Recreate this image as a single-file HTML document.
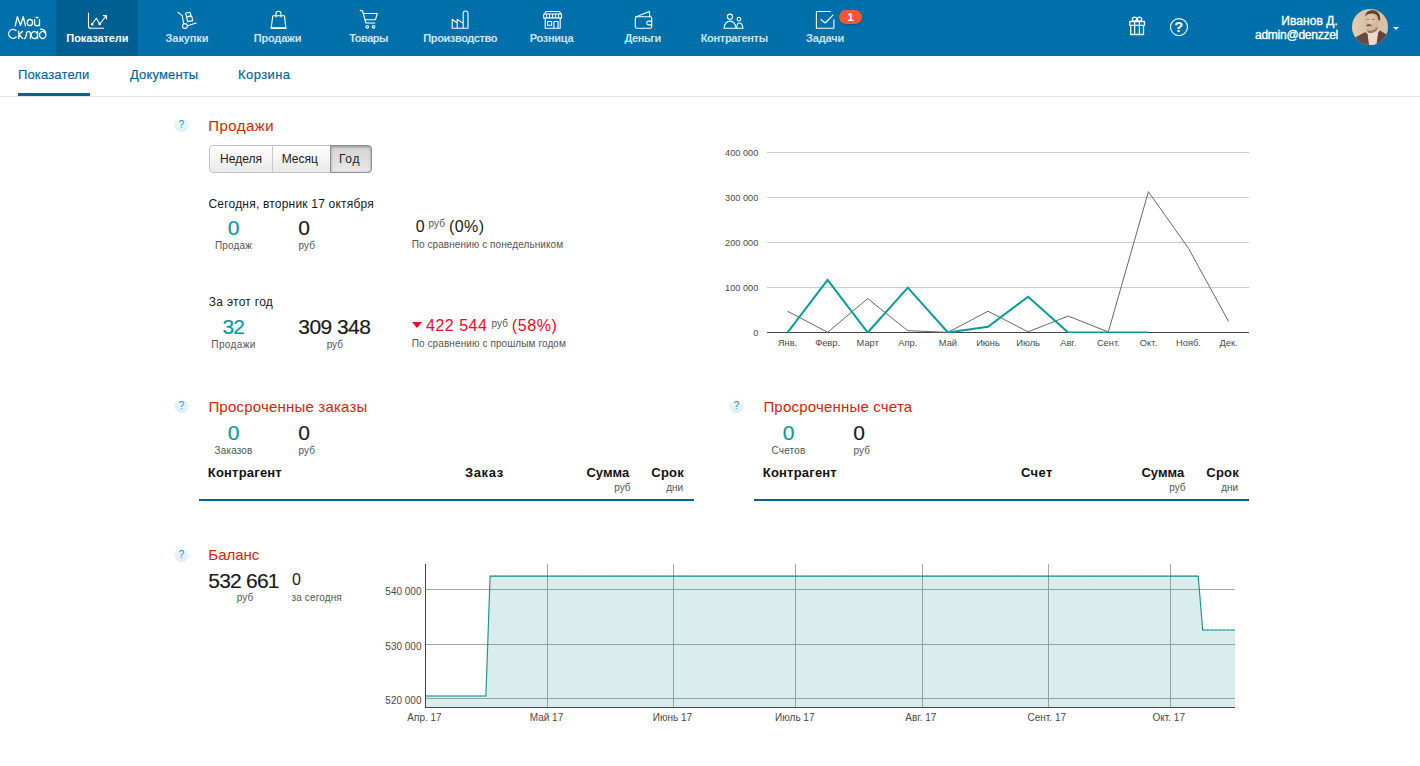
<!DOCTYPE html>
<html lang="ru">
<head>
<meta charset="utf-8">
<title>МойСклад</title>
<style>
*{box-sizing:border-box;margin:0;padding:0}
html,body{width:1420px;height:766px;overflow:hidden;background:#fff}
body{font-family:"Liberation Sans",sans-serif;color:#1a1a1a;position:relative;font-size:13px}
.abs{position:absolute}
#topnav{position:absolute;left:0;top:0;width:1420px;height:56px;background:#0070ab}
#topnav .active{position:absolute;left:56px;top:0;width:82px;height:56px;background:#005f92}
.ni{position:absolute;top:0;height:56px;width:120px;text-align:center;color:#cfe6f4;font-size:11px;font-weight:bold}
.ni .lbl{position:absolute;left:0;right:0;top:32px;line-height:13px;white-space:nowrap}
.ni.act{color:#fff}
.ni svg{position:absolute;left:50%;top:9px;margin-left:-12px;width:24px;height:24px;fill:none;stroke:#fff;stroke-width:1.1;stroke-linecap:round;stroke-linejoin:round}
#subnav{position:absolute;left:0;top:56px;width:1420px;height:41px;border-bottom:1px solid #e4e4e4}
#subnav span{position:absolute;top:11px;font-size:13px;letter-spacing:0.15px;line-height:16px;color:#00639c;white-space:nowrap;-webkit-text-stroke:.15px}
#subnav .ul{position:absolute;left:18px;top:37px;width:72px;height:3px;background:#00639a}
.h{position:absolute;font-size:15px;line-height:18px;color:#d32211;white-space:nowrap}
.q{position:absolute;width:15px;height:15px;border-radius:7.5px;background:linear-gradient(#fdfeff,#eaf5fb 40%,#dcedf8);color:#2196c6;font-size:10.5px;line-height:15px;text-align:center}
.t{position:absolute;white-space:nowrap}
.c{text-align:center}
.big{font-size:20px;line-height:22px;color:#111}
.teal{color:#039a9a}
.sm{font-size:10px;line-height:12px;color:#555}
.red{color:#fb0527}

.nl{position:absolute;top:31px;width:0;display:flex;justify-content:center;white-space:nowrap;color:#cde5f3;font-size:11px;line-height:14px;font-weight:bold}
.nl.act{color:#fff;letter-spacing:-0.1px}
.badge{position:absolute;left:839px;top:10px;width:23px;height:14px;border-radius:7px;background:#ff5533;color:#fff;font-size:11px;font-weight:bold;line-height:14px;text-align:center;box-shadow:0 1px 2px rgba(0,0,0,.25)}
.hq{position:absolute;left:1170.4px;top:20.4px;width:17px;text-align:center;color:#fff;font-weight:bold;font-size:14px;line-height:14px;-webkit-text-stroke:.2px #fff}
.uname{position:absolute;right:82px;color:#fff;font-size:12px;line-height:14px;white-space:nowrap;-webkit-text-stroke:.35px #fff}
.avatar{position:absolute;left:1352px;top:9px;width:36px;height:36px;border-radius:18px;background:radial-gradient(circle at 50% 35%,#d9c3a5 0,#c4a987 30%,#8a6f58 60%,#4a3a33 100%)}
.caret{position:absolute;left:1392.8px;top:26.8px;width:0;height:0;border-left:3.1px solid transparent;border-right:3.1px solid transparent;border-top:3.3px solid #fff}

.hd{color:#dc2308}
.gr{color:#555}
.b{font-weight:bold;color:#111}
.tri{position:absolute;width:0;height:0;border-left:5.5px solid transparent;border-right:5.5px solid transparent;border-top:6.3px solid #fb0527}
.ln{position:absolute;width:495px;height:2px;background:#00639a}
.bg{position:absolute;height:28px;width:163px;border:1px solid #c3c3c3;border-radius:4px;background:linear-gradient(#fff,#e9e9e9);font-size:12px;line-height:26px;color:#222}
.bg span{position:absolute;top:0;display:block;text-align:center;border-right:1px solid #c9c9c9;height:26px}
.bg span.on{top:-1px;left:120px;width:42px;height:28px;line-height:26.6px;border:1px solid #8e8e8e;border-radius:0 4px 4px 0;background:linear-gradient(#d4d4d4,#e8e8e8);box-shadow:inset 0 1px 3px rgba(0,0,0,.32)}
</style>
</head>
<body>
<div id="topnav">
  <div class="active"></div>
  <svg class="abs" style="left:0;top:0" width="1420" height="56" viewBox="0 0 1420 56" fill="none" stroke="#fff" stroke-width="1.1" stroke-linecap="round" stroke-linejoin="round">
    <!-- logo -->
    <g stroke-width="1.3">
    <path d="M15.2 25.8L17.4 16.6L20.5 25.5L23.2 16.6L25.5 25.8"/>
    <ellipse cx="29.9" cy="22.6" rx="2.7" ry="3.1"/>
    <path d="M34.6 19.6V23.2A2.45 2.6 0 0 0 39.5 23.2V19.6M39.5 22V25.8M36.1 17.2A1.1 1.1 0 0 0 38 17.2"/>
    <path d="M16 30.6A4.4 4.4 0 1 0 16.2 37"/>
    <path d="M18.8 31.2V38.6M22.6 31.2L19 34.8L22.8 38.6"/>
    <path d="M24.6 38.5C26 38.2 26.2 36 26.4 34C26.6 32 27.2 31.3 28.4 31.3C29.8 31.3 30.4 32.2 30.4 34V38.6"/>
    <path d="M37.6 31.3V38.6M37.6 35A3.2 3.5 0 1 0 37.6 35.1"/>
    <path d="M45.9 34.9A3.2 3.5 0 1 0 45.9 35C45.9 31 44 28.8 40.4 29.2"/>
    </g>
    <!-- chart -->
    <path d="M88.5 13V26Q88.5 28.3 90.8 28.3H103.7"/>
    <path d="M92.1 24.3L96.3 18.2L99.7 24L106.4 15.7M103.3 15.6H106.5V19"/>
    <circle cx="92.1" cy="24.3" r="0.8" fill="#fff"/><circle cx="99.7" cy="24" r="0.8" fill="#fff"/>
    <!-- hand truck -->
    <path d="M178.1 12.3L182.2 15.7L183.6 23.3"/>
    <circle cx="184.9" cy="26" r="2.4"/>
    <path d="M187.6 25.7L196.1 23"/>
    <path d="M185.6 13.3L190 12.3L191 15.8L186.6 16.9ZM186.6 16.9L191.7 16.2L192.7 20.6L187.6 21.6Z"/>
    <!-- bag -->
    <path d="M272.8 15.7H284.5L285.8 28.3H271.2Z"/>
    <path d="M271.2 28.1H285.8" stroke-width="1.6"/>
    <path d="M276 17V13.8A2.5 2.5 0 0 1 281 13.8V17"/>
    <!-- cart -->
    <path d="M360.2 10.4L362.6 11L365.9 23H374.8"/>
    <path d="M363.3 13.5H377.3L375.4 19.8H365"/>
    <circle cx="367.2" cy="26.8" r="1.3"/><circle cx="373.5" cy="26.8" r="1.3"/>
    <!-- factory -->
    <path d="M452.2 28.3V19.2L457.2 23V19.2L463.2 23.4M452.2 28.3H468V13.4A2.4 2.4 0 0 0 463.2 13.4V28.3M457.2 23V28.3"/>
    <!-- shop -->
    <path d="M546 11.5H559.4L561.6 15V17.9H543.6V15ZM545.2 18V28.3H560.2V18M547.6 21.5H551.6V25.3H547.6ZM553.9 28.3V21.5H558V28.3"/>
    <path d="M546.6 14V17.9M549.6 14V17.9M552.6 14V17.9M555.6 14V17.9M558.6 14V17.9M544 14H561.2" stroke-width="1"/>
    <!-- wallet -->
    <path d="M635.3 18.2A1.5 1.5 0 0 1 636.8 16.7H650.2A1.5 1.5 0 0 1 651.7 18.2V26.8A1.5 1.5 0 0 1 650.2 28.3H636.8A1.5 1.5 0 0 1 635.3 26.8Z"/>
    <path d="M635.6 16.9L649.3 11.4L649.9 16.7"/>
    <path d="M651.7 21.1H648.6A1.6 1.6 0 0 0 648.6 24.9H651.7"/>
    <!-- people -->
    <circle cx="730" cy="16.7" r="2.6"/>
    <path d="M724 28.3C724.6 23.5 727 21.1 730 21.1C733 21.1 735.4 23.5 736 28.3Z"/>
    <circle cx="738.9" cy="19.2" r="1.8"/>
    <path d="M736.6 28.3C736.8 25 737.6 23 739.2 23C741.4 23 742.7 25 743 28.3Z"/>
    <!-- tasks -->
    <path d="M830.3 11.5H816.4V28.3H833.9V19.8"/>
    <path d="M821 19.5L825.2 23L833 15.2"/>
    <!-- gift -->
    <g stroke-width="1.3"><path d="M1129.7 21.5H1144.5V25.3H1129.7ZM1130.7 25.3V34.5H1143.5V25.3M1134.6 21.5V34.5M1139.4 21.5V34.5"/>
    <circle cx="1134.5" cy="19.2" r="2.1"/><circle cx="1139.5" cy="19.2" r="2.1"/></g>
    <!-- help -->
    <circle cx="1179" cy="27.1" r="8.5"/>
  </svg>
  <div class="nl act" style="left:97.4px">Показатели</div>
  <div class="nl" style="left:187px;letter-spacing:-0.1px">Закупки</div>
  <div class="nl" style="left:277.5px;letter-spacing:-0.18px">Продажи</div>
  <div class="nl" style="left:368.6px;letter-spacing:-0.5px">Товары</div>
  <div class="nl" style="left:460.2px;letter-spacing:-0.4px">Производство</div>
  <div class="nl" style="left:551.5px;letter-spacing:-0.3px">Розница</div>
  <div class="nl" style="left:642.7px;letter-spacing:-0.4px">Деньги</div>
  <div class="nl" style="left:734.2px;letter-spacing:-0.3px">Контрагенты</div>
  <div class="nl" style="left:825.1px;letter-spacing:-0.13px">Задачи</div>
  <div class="badge">1</div>
  <div class="hq">?</div>
  <div class="uname" style="top:14px;letter-spacing:.09px">Иванов Д.</div>
  <div class="uname" style="top:28px;letter-spacing:-.25px">admin@denzzel</div>
  <svg class="abs" style="left:1352px;top:9px" width="36" height="36" viewBox="1352 9 36 36">
    <defs><clipPath id="avc"><circle cx="1370" cy="27" r="18"/></clipPath><filter id="avb" x="-10%" y="-10%" width="120%" height="120%"><feGaussianBlur stdDeviation="0.75"/></filter>
    <linearGradient id="avg" x1="0" y1="0" x2="1" y2="0"><stop offset="0" stop-color="#e2cfb8"/><stop offset="0.5" stop-color="#d6bfa3"/><stop offset="1" stop-color="#dcc5aa"/></linearGradient></defs>
    <g clip-path="url(#avc)"><rect x="1350" y="7" width="40" height="40" fill="url(#avg)"/>
    <g filter="url(#avb)">
      <path d="M1354 38L1365 32.2L1368 34L1369.5 46H1352Z" fill="#6a4a40"/>
      <path d="M1388 35.5L1380 30.5L1377.5 33L1375.5 46H1390Z" fill="#64443b"/>
      <path d="M1367.4 32.6L1378.4 31L1376.2 46H1369.2Z" fill="#ebdac5"/>
      <ellipse cx="1371.8" cy="21.6" rx="6.8" ry="8.8" fill="#d3b999"/>
      <ellipse cx="1370.6" cy="19.5" rx="4.6" ry="5" fill="#dcc5a8"/>
      <path d="M1365.2 16.5C1365.6 12 1369 9.9 1373 10.2C1377.5 10.6 1380.5 13.5 1380.2 20.5L1378.3 20C1378 16 1376.4 13.6 1372 13.6C1368.5 13.6 1366.6 14.8 1365.2 16.5Z" fill="#5d3f33"/>
      <path d="M1366.6 25.7C1367.6 24 1369.8 24 1371.4 25.6C1370 25.6 1368 25.8 1366.6 25.7Z" fill="#6b4a3c" stroke="#6b4a3c" stroke-width="0.7"/>
      <path d="M1366.3 27.5C1367.5 31.8 1373 32.5 1378 26C1377.5 31.5 1372.5 34.5 1368 32.5Z" fill="#9a7a66"/>
      <path d="M1366.8 19.4H1369.2M1371.8 19.4H1374.4" stroke="#8a6a58" stroke-width="0.9"/>
    </g></g>
  </svg>
  <div class="caret"></div>
</div>
<div id="subnav">
  <span style="left:18px">Показатели</span>
  <span style="left:130px">Документы</span>
  <span style="left:238px;letter-spacing:.42px">Корзина</span>
  <div class="ul"></div>
</div>
<!--MAIN-->
<svg class="abs" style="left:0;top:0" width="1420" height="766" viewBox="0 0 1420 766" font-family="Liberation Sans, sans-serif"><defs><clipPath id="c1"><rect x="760" y="140" width="500" height="193"/></clipPath></defs><rect x="767" y="152.0" width="482" height="1" fill="#cbcbcb"/><rect x="767" y="197.0" width="482" height="1" fill="#cbcbcb"/><rect x="767" y="242.0" width="482" height="1" fill="#cbcbcb"/><rect x="767" y="287.0" width="482" height="1" fill="#cbcbcb"/><text x="758.3" y="155.7" font-size="9.2" fill="#4a4a4a" text-anchor="end">400 000</text><text x="758.3" y="200.7" font-size="9.2" fill="#4a4a4a" text-anchor="end">300 000</text><text x="758.3" y="245.7" font-size="9.2" fill="#4a4a4a" text-anchor="end">200 000</text><text x="758.3" y="290.7" font-size="9.2" fill="#4a4a4a" text-anchor="end">100 000</text><text x="758.3" y="335.7" font-size="9.2" fill="#4a4a4a" text-anchor="end">0</text><text x="787.5" y="345.9" font-size="9.3" fill="#4a4a4a" text-anchor="middle">Янв.</text><text x="827.6" y="345.9" font-size="9.3" fill="#4a4a4a" text-anchor="middle">Февр.</text><text x="867.7" y="345.9" font-size="9.3" fill="#4a4a4a" text-anchor="middle">Март</text><text x="907.8" y="345.9" font-size="9.3" fill="#4a4a4a" text-anchor="middle">Апр.</text><text x="947.9" y="345.9" font-size="9.3" fill="#4a4a4a" text-anchor="middle">Май</text><text x="988.0" y="345.9" font-size="9.3" fill="#4a4a4a" text-anchor="middle">Июнь</text><text x="1028.1" y="345.9" font-size="9.3" fill="#4a4a4a" text-anchor="middle">Июль</text><text x="1068.2" y="345.9" font-size="9.3" fill="#4a4a4a" text-anchor="middle">Авг.</text><text x="1108.3" y="345.9" font-size="9.3" fill="#4a4a4a" text-anchor="middle">Сент.</text><text x="1148.4" y="345.9" font-size="9.3" fill="#4a4a4a" text-anchor="middle">Окт.</text><text x="1188.5" y="345.9" font-size="9.3" fill="#4a4a4a" text-anchor="middle">Нояб.</text><text x="1228.6" y="345.9" font-size="9.3" fill="#4a4a4a" text-anchor="middle">Дек.</text><rect x="767" y="332.0" width="482" height="1" fill="#454545"/><g clip-path="url(#c1)"><polyline fill="none" stroke="#696969" stroke-width="1" points="787.5,311.21 827.6,332.27 867.7,298.62 907.8,330.7 947.9,332.37 988.0,311.21 1028.1,331.82 1068.2,316.07 1108.3,331.96 1148.4,191.69 1188.5,248.31 1228.6,321.52"/><polyline fill="none" stroke="#069b9b" stroke-width="2" stroke-linejoin="miter" points="787.5,332.5 827.6,279.89 867.7,332.5 907.8,287.63 947.9,332.5 988.0,326.69 1028.1,296.81 1068.2,332.5 1108.3,332.5 1148.4,332.5"/></g><rect x="426" y="589" width="809" height="1" fill="#a2a9a9"/><rect x="426" y="644" width="809" height="1" fill="#a2a9a9"/><rect x="426" y="698" width="809" height="1" fill="#a2a9a9"/><rect x="547" y="564" width="1" height="143" fill="#a2a9a9"/><rect x="673" y="564" width="1" height="143" fill="#a2a9a9"/><rect x="795" y="564" width="1" height="143" fill="#a2a9a9"/><rect x="922" y="564" width="1" height="143" fill="#a2a9a9"/><rect x="1048" y="564" width="1" height="143" fill="#a2a9a9"/><rect x="1170" y="564" width="1" height="143" fill="#a2a9a9"/><polygon fill="#1b9293" fill-opacity="0.165" points="425.5,696.0 485.9,696.0 490.1,576.1 1198.2,576.1 1202.7,630.0 1235.0,630.0 1235,707 425.5,707"/><polyline fill="none" stroke="#1b9293" stroke-width="1.15" points="425.5,696.0 485.9,696.0 490.1,576.1 1198.2,576.1 1202.7,630.0 1235.0,630.0"/><path fill="none" stroke="#0f6f70" stroke-opacity="0.55" stroke-width="1.1" stroke-dasharray="1.1 2.9735" d="M427 696.0H485.9M490.5 576.1H1198M1203 630.0H1235"/><rect x="425" y="564" width="1" height="144" fill="#454545"/><rect x="425" y="707" width="810" height="1" fill="#454545"/><text x="421.5" y="594.9" font-size="10" fill="#4a4a4a" text-anchor="end">540 000</text><text x="421.5" y="649.9" font-size="10" fill="#4a4a4a" text-anchor="end">530 000</text><text x="421.5" y="703.9" font-size="10" fill="#4a4a4a" text-anchor="end">520 000</text><text x="424.5" y="720.9" font-size="10" fill="#4a4a4a" text-anchor="middle">Апр. 17</text><text x="546.5" y="720.9" font-size="10" fill="#4a4a4a" text-anchor="middle">Май 17</text><text x="672.5" y="720.9" font-size="10" fill="#4a4a4a" text-anchor="middle">Июнь 17</text><text x="794.8" y="720.9" font-size="10" fill="#4a4a4a" text-anchor="middle">Июль 17</text><text x="920.8" y="720.9" font-size="10" fill="#4a4a4a" text-anchor="middle">Авг. 17</text><text x="1046.8" y="720.9" font-size="10" fill="#4a4a4a" text-anchor="middle">Сент. 17</text><text x="1168.8" y="720.9" font-size="10" fill="#4a4a4a" text-anchor="middle">Окт. 17</text></svg>
<div class="q" style="left:174.0px;top:116.9px">?</div>
<div class="t hd" style="font-size:15px;line-height:18px;top:117.00px;left:208.3px;letter-spacing:.45px;">Продажи</div>
<div class="bg" style="left:209px;top:145px"><span style="left:0;width:63px">Неделя</span><span style="left:63px;width:57.5px;padding-right:3px">Месяц</span><span class="on" style="letter-spacing:.7px;padding-right:3px">Год</span></div>
<div class="t " style="font-size:12px;line-height:14px;top:196.74px;left:208.5px;letter-spacing:.2px;">Сегодня, вторник 17 октября</div>
<div class="t teal" style="font-size:21px;line-height:25px;top:215.42px;left:233.6px;width:0;display:flex;justify-content:center;-webkit-text-stroke:.18px;">0</div>
<div class="t gr" style="font-size:10px;line-height:12px;top:239.53px;left:233.5px;width:0;display:flex;justify-content:center;letter-spacing:.15px;">Продаж</div>
<div class="t " style="font-size:21px;line-height:25px;top:215.42px;left:298.3px;-webkit-text-stroke:.18px;">0</div>
<div class="t gr" style="font-size:10px;line-height:12px;top:239.53px;left:298.6px;">руб</div>
<div class="t " style="font-size:16px;line-height:19px;top:216.76px;left:415.7px;">0</div>
<div class="t gr" style="font-size:10px;line-height:12px;top:218.44px;left:428.6px;">руб</div>
<div class="t " style="font-size:16px;line-height:19px;top:216.76px;left:448.9px;letter-spacing:.5px;">(0%)</div>
<div class="t gr" style="font-size:10px;line-height:12px;top:238.53px;left:411.7px;letter-spacing:.08px;">По сравнению с понедельником</div>
<div class="t " style="font-size:12px;line-height:14px;top:294.74px;left:208.8px;letter-spacing:.28px;">За этот год</div>
<div class="t teal" style="font-size:21px;line-height:25px;top:313.72px;left:233.3px;width:0;display:flex;justify-content:center;-webkit-text-stroke:.18px;letter-spacing:-.8px;">32</div>
<div class="t gr" style="font-size:10px;line-height:12px;top:338.64px;left:233.5px;width:0;display:flex;justify-content:center;letter-spacing:.37px;">Продажи</div>
<div class="t " style="font-size:21px;line-height:25px;top:313.72px;left:334.3px;width:0;display:flex;justify-content:center;-webkit-text-stroke:.18px;letter-spacing:-.55px;">309 348</div>
<div class="t gr" style="font-size:10px;line-height:12px;top:338.64px;left:334.8px;width:0;display:flex;justify-content:center;">руб</div>
<div class="tri" style="left:411.9px;top:321.8px"></div>
<div class="t red" style="font-size:16px;line-height:19px;top:315.76px;left:426px;letter-spacing:.5px;">422 544</div>
<div class="t gr" style="font-size:10px;line-height:12px;top:317.54px;left:491.6px;">руб</div>
<div class="t red" style="font-size:16px;line-height:19px;top:315.76px;left:511.8px;letter-spacing:.6px;">(58%)</div>
<div class="t gr" style="font-size:10px;line-height:12px;top:337.54px;left:411.7px;letter-spacing:.1px;">По сравнению с прошлым годом</div>
<div class="q" style="left:174.0px;top:398.4px">?</div>
<div class="t hd" style="font-size:15px;line-height:18px;top:397.90px;left:208.4px;letter-spacing:.2px;">Просроченные заказы</div>
<div class="t teal" style="font-size:21px;line-height:25px;top:419.52px;left:233.6px;width:0;display:flex;justify-content:center;-webkit-text-stroke:.18px;">0</div>
<div class="t gr" style="font-size:10px;line-height:12px;top:444.94px;left:233.5px;width:0;display:flex;justify-content:center;letter-spacing:.15px;">Заказов</div>
<div class="t " style="font-size:21px;line-height:25px;top:419.52px;left:298.3px;-webkit-text-stroke:.18px;">0</div>
<div class="t gr" style="font-size:10px;line-height:12px;top:444.94px;left:298.6px;">руб</div>
<div class="t b" style="font-size:13px;line-height:16px;top:465.20px;left:207.8px;letter-spacing:.2px;">Контрагент</div>
<div class="t b" style="font-size:13px;line-height:16px;top:465.20px;left:465px;letter-spacing:.6px;">Заказ</div>
<div class="t b" style="font-size:13px;line-height:16px;top:465.20px;right:790.8px;">Сумма</div>
<div class="t b" style="font-size:13px;line-height:16px;top:465.20px;right:736.1px;letter-spacing:.2px;">Срок</div>
<div class="t gr" style="font-size:10px;line-height:12px;top:481.54px;right:789.5px;">руб</div>
<div class="t gr" style="font-size:10px;line-height:12px;top:481.54px;right:736.8px;">дни</div>
<div class="ln" style="left:199px;top:499px"></div>
<div class="q" style="left:729.0px;top:398.4px">?</div>
<div class="t hd" style="font-size:15px;line-height:18px;top:397.90px;left:763.4px;letter-spacing:.2px;">Просроченные счета</div>
<div class="t teal" style="font-size:21px;line-height:25px;top:419.52px;left:788.6px;width:0;display:flex;justify-content:center;-webkit-text-stroke:.18px;">0</div>
<div class="t gr" style="font-size:10px;line-height:12px;top:444.94px;left:788.5px;width:0;display:flex;justify-content:center;letter-spacing:.15px;">Счетов</div>
<div class="t " style="font-size:21px;line-height:25px;top:419.52px;left:853.3px;-webkit-text-stroke:.18px;">0</div>
<div class="t gr" style="font-size:10px;line-height:12px;top:444.94px;left:853.6px;">руб</div>
<div class="t b" style="font-size:13px;line-height:16px;top:465.20px;left:762.8px;letter-spacing:.2px;">Контрагент</div>
<div class="t b" style="font-size:13px;line-height:16px;top:465.20px;left:1020.9px;letter-spacing:.45px;">Счет</div>
<div class="t b" style="font-size:13px;line-height:16px;top:465.20px;right:235.79999999999995px;">Сумма</div>
<div class="t b" style="font-size:13px;line-height:16px;top:465.20px;right:181.0999999999999px;letter-spacing:.2px;">Срок</div>
<div class="t gr" style="font-size:10px;line-height:12px;top:481.54px;right:234.5px;">руб</div>
<div class="t gr" style="font-size:10px;line-height:12px;top:481.54px;right:181.79999999999995px;">дни</div>
<div class="ln" style="left:754px;top:499px"></div>
<div class="q" style="left:174.0px;top:546.5px">?</div>
<div class="t hd" style="font-size:15px;line-height:18px;top:545.60px;left:208.3px;">Баланс</div>
<div class="t " style="font-size:21px;line-height:25px;top:568.02px;left:243.5px;width:0;display:flex;justify-content:center;-webkit-text-stroke:.18px;letter-spacing:-.8px;">532 661</div>
<div class="t gr" style="font-size:10px;line-height:12px;top:591.53px;left:245px;width:0;display:flex;justify-content:center;">руб</div>
<div class="t " style="font-size:16px;line-height:19px;top:569.86px;left:291.9px;">0</div>
<div class="t gr" style="font-size:10px;line-height:12px;top:591.53px;left:291.5px;letter-spacing:.13px;">за сегодня</div>
<!--/MAIN-->
</body>
</html>
